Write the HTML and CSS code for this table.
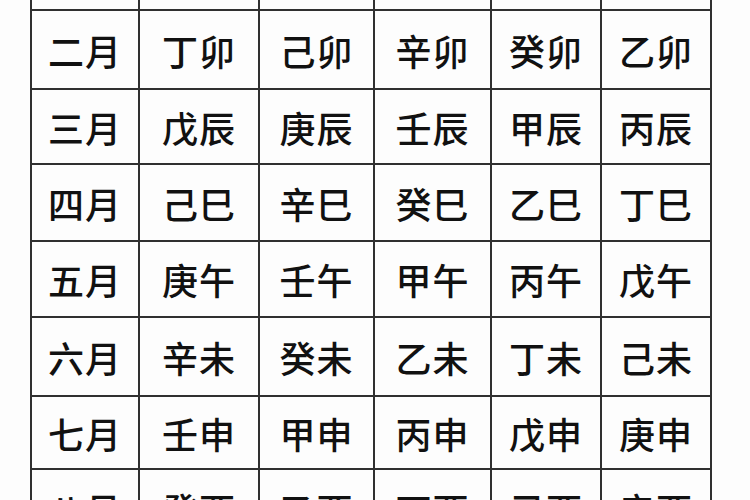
FILE: index.html
```html
<!DOCTYPE html>
<html lang="zh-CN">
<head>
<meta charset="utf-8">
<title>月干支表</title>
<link rel="stylesheet" href="styles.css">
</head>
<body>
<div class="page">
  <div class="grid">
    <div class="cell"></div><div class="cell"></div><div class="cell"></div><div class="cell"></div><div class="cell"></div><div class="cell"></div>
    <div class="cell">二月</div><div class="cell">丁卯</div><div class="cell">己卯</div><div class="cell">辛卯</div><div class="cell">癸卯</div><div class="cell">乙卯</div>
    <div class="cell">三月</div><div class="cell">戊辰</div><div class="cell">庚辰</div><div class="cell">壬辰</div><div class="cell">甲辰</div><div class="cell">丙辰</div>
    <div class="cell">四月</div><div class="cell">己巳</div><div class="cell">辛巳</div><div class="cell">癸巳</div><div class="cell">乙巳</div><div class="cell">丁巳</div>
    <div class="cell">五月</div><div class="cell">庚午</div><div class="cell">壬午</div><div class="cell">甲午</div><div class="cell">丙午</div><div class="cell">戊午</div>
    <div class="cell">六月</div><div class="cell">辛未</div><div class="cell">癸未</div><div class="cell">乙未</div><div class="cell">丁未</div><div class="cell">己未</div>
    <div class="cell">七月</div><div class="cell">壬申</div><div class="cell">甲申</div><div class="cell">丙申</div><div class="cell">戊申</div><div class="cell">庚申</div>
    <div class="cell">八月</div><div class="cell">癸酉</div><div class="cell">乙酉</div><div class="cell">丁酉</div><div class="cell">己酉</div><div class="cell">辛酉</div>
  </div>
</div>
</body>
</html>
```

FILE: styles.css
```css
html, body {
  margin: 0;
  padding: 0;
  background: #fdfdfd;
  overflow: hidden;
}

.page {
  width: 750px;
  height: 500px;
  overflow: hidden;
  background: #fdfdfd;
}

.grid {
  display: grid;
  grid-template-columns: 106px 118px 113px 115px 108px 108px;
  grid-template-rows: 77px 77px 73px 75px 74px 77px 71px 77px;
  gap: 2px;
  padding: 2px;
  width: max-content;
  margin: -70px 0 0 30px;
  background: #303030;
}

.cell {
  background: #fdfdfd;
  display: flex;
  align-items: center;
  justify-content: center;
  font-family: "Noto Sans CJK SC", "Noto Sans", sans-serif;
  font-size: 36px;
  font-weight: 500;
  color: #111;
  letter-spacing: 1px;
  line-height: 1;
}
```
